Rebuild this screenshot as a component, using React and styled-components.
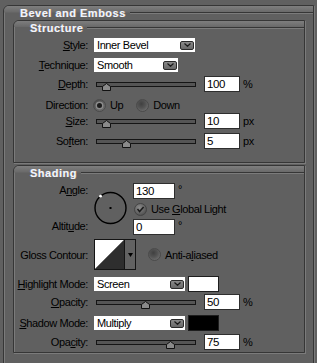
import React from 'react';
import styled, { createGlobalStyle } from 'styled-components';

const GlobalStyle = createGlobalStyle`
  html, body {
    margin: 0;
    padding: 0;
    background: #606060;
    overflow: hidden;
  }
  body {
    font-family: "Liberation Sans", Arial, sans-serif;
    font-size: 11px;
    color: #000;
  }
`;

const Dialog = styled.div`
  width: 317px;
  height: 363px;
  box-sizing: border-box;
  padding: 5px 3px 0 3px;
  overflow: hidden;
  letter-spacing: -0.4px;
`;

const Group = styled.section`
  border: 1px solid #363636;
  border-top-left-radius: 6px;
  box-shadow: inset 1px 1px 0 #7b7b7b, 1px 1px 0 #7b7b7b;
  margin-top: ${p => p.$mt || 0}px;
`;

const Head = styled.header`
  display: flex;
  align-items: center;
  height: ${p => p.$h}px;
  border-top-left-radius: 5px;
  background: linear-gradient(to bottom, #7e7e7e 0, #6a6a6a ${p => p.$h / 2 - 1}px, rgba(96, 96, 96, 0) ${p => p.$h / 2}px);
`;

const Title = styled.span`
  margin-left: 16px;
  padding-right: 4px;
  font-size: 11px;
  font-weight: bold;
  letter-spacing: 0.5px;
  line-height: 12px;
  color: #f2f4fa;
  text-shadow: -0.5px 0 rgba(120, 170, 255, 0.5), 0.5px 0 rgba(255, 180, 90, 0.5);
`;

const Rule = styled.span`
  flex: 1;
  height: 0;
  border-top: 1px solid #363636;
  border-bottom: 1px solid #7b7b7b;
`;

const Body = styled.div`
  padding: 0 ${p => p.$pr || 0}px ${p => p.$pb || 0}px ${p => p.$pl || 0}px;
`;

const Row = styled.div`
  display: flex;
  align-items: center;
  height: ${p => p.$h || 16}px;
  margin-top: ${p => p.$mt || 0}px;
  white-space: nowrap;
`;

const Label = styled.span`
  display: inline-block;
  flex-shrink: 0;
  width: 74px;
  margin-right: 6px;
  margin-top: ${p => p.$mt || 0}px;
  text-align: right;
  line-height: 16px;
`;

const Key = styled.span`
  text-decoration: underline;
  text-underline-offset: 1px;
`;

const Text = styled.span`
  margin-left: ${p => p.$ml || 0}px;
`;

const Unit = styled.span`
  margin-left: 3px;
  align-self: ${p => (p.$sup ? 'flex-start' : 'center')};
  line-height: ${p => (p.$sup ? '12px' : '16px')};
`;

const Field = styled.input`
  width: ${p => p.$w || 36}px;
  height: 16px;
  box-sizing: border-box;
  margin: 0;
  padding: 0 0 0 2px;
  border: 1px solid #2e2e2e;
  background: #fff;
  font-family: inherit;
  font-size: 11.5px;
  letter-spacing: -0.4px;
  color: #000;
  outline: none;
`;

const Select = styled.div`
  display: flex;
  align-items: center;
  justify-content: space-between;
  width: ${p => p.$w}px;
  height: 14px;
  box-sizing: border-box;
  padding: 0 1px 0 3px;
  background: #fff;
`;

const DropBtn = styled.span`
  display: flex;
  align-items: center;
  justify-content: center;
  width: 14px;
  height: 9px;
  box-sizing: border-box;
  border: 1px solid #2a2a2a;
  border-radius: 2px;
  background: linear-gradient(#8a8a8a, #686868);
`;

const Swatch = styled.span`
  width: 31px;
  height: 16px;
  box-sizing: border-box;
  margin-left: 3px;
  border: 1px solid #1e1e1e;
  background: ${p => p.$color};
`;

const Track = styled.div`
  position: relative;
  flex-shrink: 0;
  width: 100px;
  height: 5px;
  box-sizing: border-box;
  margin: 0 8px 0 2px;
  border: 1px solid #151515;
  background: #555;
`;

const Thumb = styled.svg`
  position: absolute;
  top: 0;
  width: 9px;
  height: 8px;
  margin-left: -5px;
`;

const Radio = styled.span`
  display: flex;
  align-items: center;
  justify-content: center;
  flex-shrink: 0;
  width: 13px;
  height: 13px;
  box-sizing: border-box;
  margin-left: ${p => p.$ml || 0}px;
  border-radius: 50%;
  border: 1px solid #4a4a4a;
  background: radial-gradient(circle at 40% 35%, #404040 0, #555 45%, #7c7c7c 100%);

  &::after {
    content: '';
    display: ${p => (p.$on ? 'block' : 'none')};
    width: 5px;
    height: 5px;
    border-radius: 50%;
    background: #1c1c1c;
    box-shadow: 0 0 0 1.5px #8a8a8a;
  }
`;

const AngleBlock = styled.div`
  display: flex;
  margin-top: 3px;
`;

const LabelCol = styled.div`
  display: flex;
  flex-direction: column;
  width: 80px;
`;

const Dial = styled.svg`
  width: 33px;
  height: 34px;
  margin-top: 8px;
  flex-shrink: 0;
`;

const FieldCol = styled.div`
  display: flex;
  flex-direction: column;
  margin-left: 6px;
`;

const ContourBox = styled.div`
  display: flex;
  width: 42px;
  height: 31px;
  box-sizing: border-box;
  border: 1px solid #141414;
`;

const ContourArrow = styled.span`
  display: flex;
  align-items: center;
  justify-content: center;
  flex: 1;
  border-left: 1px solid #141414;
  background: #626262;
`;

function Chevron() {
  return (
    <svg width="7" height="4" viewBox="0 0 7 4">
      <polyline points="0.5,0.5 3.5,3.3 6.5,0.5" fill="none" stroke="#1a1a1a" strokeWidth="1.2" />
    </svg>
  );
}

function Slider({ value }) {
  return (
    <Track>
      <Thumb viewBox="0 0 9 8" style={{ left: `${value}%` }}>
        <polygon points="0.5,7.5 0.5,3.5 4.5,0.5 8.5,3.5 8.5,7.5" fill="#8a8a8a" stroke="#111" strokeWidth="1" />
      </Thumb>
    </Track>
  );
}

function CheckDot() {
  return (
    <svg width="13" height="13" viewBox="0 0 13 13" style={{ marginLeft: 1, flexShrink: 0 }}>
      <defs>
        <radialGradient id="cg" cx="40%" cy="35%" r="70%">
          <stop offset="0" stopColor="#8c8c8c" />
          <stop offset="1" stopColor="#4c4c4c" />
        </radialGradient>
      </defs>
      <circle cx="6.5" cy="6.5" r="6" fill="url(#cg)" stroke="#444" />
      <polyline points="3.5,6 5.6,8.6 9.6,4" fill="none" stroke="#1a1a1a" strokeWidth="1.5" />
    </svg>
  );
}

const angle = 130;
const rad = (angle * Math.PI) / 180;
const mx = 16.5 + 15.5 * Math.cos(rad);
const my = 17 - 15.5 * Math.sin(rad);

export default function App() {
  return (
    <>
      <GlobalStyle />
      <Dialog>
        <Group>
          <Head $h={14}>
            <Title>Bevel and Emboss</Title>
            <Rule />
          </Head>
          <Body $pl={9} $pr={8} $pb={20}>
            <Group>
              <Head $h={13}>
                <Title>Structure</Title>
                <Rule />
              </Head>
              <Body $pb={13}>
                <Row $mt={3}>
                  <Label><Key>S</Key>tyle:</Label>
                  <Select $w={101}>Inner Bevel<DropBtn><Chevron /></DropBtn></Select>
                </Row>
                <Row $mt={4}>
                  <Label><Key>T</Key>echnique:</Label>
                  <Select $w={84}>Smooth<DropBtn><Chevron /></DropBtn></Select>
                </Row>
                <Row $mt={3}>
                  <Label><Key>D</Key>epth:</Label>
                  <Slider value={10} />
                  <Field readOnly value="100" />
                  <Unit>%</Unit>
                </Row>
                <Row $mt={5}>
                  <Label>Direction:</Label>
                  <Radio $on $ml={-1} />
                  <Text $ml={4}>Up</Text>
                  <Radio $ml={13} />
                  <Text $ml={4}>Down</Text>
                </Row>
                <Row>
                  <Label><Key>S</Key>ize:</Label>
                  <Slider value={10} />
                  <Field readOnly value="10" />
                  <Unit>px</Unit>
                </Row>
                <Row $mt={4}>
                  <Label>So<Key>f</Key>ten:</Label>
                  <Slider value={31} />
                  <Field readOnly value="5" />
                  <Unit>px</Unit>
                </Row>
              </Body>
            </Group>

            <Group $mt={2}>
              <Head $h={14}>
                <Title>Shading</Title>
                <Rule />
              </Head>
              <Body $pb={2}>
                <AngleBlock>
                  <LabelCol>
                    <Label $mt={-1}>A<Key>n</Key>gle:</Label>
                    <Label $mt={19.5}>Altit<Key>u</Key>de:</Label>
                  </LabelCol>
                  <Dial viewBox="0 0 33 34">
                    <circle cx="16.5" cy="17" r="15.5" fill="none" stroke="#000" strokeWidth="1.4" />
                    <rect x="15.5" y="16" width="2" height="2" fill="#000" />
                    <circle cx={mx} cy={my} r="1.4" fill="#fff" />
                  </Dial>
                  <FieldCol>
                    <Row>
                      <Field $w={42} readOnly value="130" />
                      <Unit $sup>°</Unit>
                    </Row>
                    <Row $h={20}>
                      <CheckDot />
                      <Text $ml={4}>Use <Key>G</Key>lobal Light</Text>
                    </Row>
                    <Row>
                      <Field $w={42} readOnly value="0" />
                      <Unit $sup>°</Unit>
                    </Row>
                  </FieldCol>
                </AngleBlock>

                <Row $h={31} $mt={4}>
                  <Label>Gloss Contour:</Label>
                  <ContourBox>
                    <svg width="29" height="29" viewBox="0 0 29 29">
                      <polygon points="0,0 29,0 0,29" fill="#fff" />
                      <polygon points="29,0 29,29 0,29" fill="#2e2e2e" />
                    </svg>
                    <ContourArrow>
                      <svg width="5" height="4" viewBox="0 0 5 4">
                        <polygon points="0,0 5,0 2.5,4" fill="#000" />
                      </svg>
                    </ContourArrow>
                  </ContourBox>
                  <Radio $ml={12} />
                  <Text $ml={4}>Anti-a<Key>l</Key>iased</Text>
                </Row>

                <Row $mt={6}>
                  <Label><Key>H</Key>ighlight Mode:</Label>
                  <Select $w={91}>Screen<DropBtn><Chevron /></DropBtn></Select>
                  <Swatch $color="#fff" />
                </Row>
                <Row $mt={2}>
                  <Label><Key>O</Key>pacity:</Label>
                  <Slider value={50} />
                  <Field readOnly value="50" />
                  <Unit>%</Unit>
                </Row>
                <Row $mt={5}>
                  <Label><Key>S</Key>hadow Mode:</Label>
                  <Select $w={91}>Multiply<DropBtn><Chevron /></DropBtn></Select>
                  <Swatch $color="#000" />
                </Row>
                <Row $mt={3}>
                  <Label>Opa<Key>c</Key>ity:</Label>
                  <Slider value={75} />
                  <Field readOnly value="75" />
                  <Unit>%</Unit>
                </Row>
              </Body>
            </Group>
          </Body>
        </Group>
      </Dialog>
    </>
  );
}
